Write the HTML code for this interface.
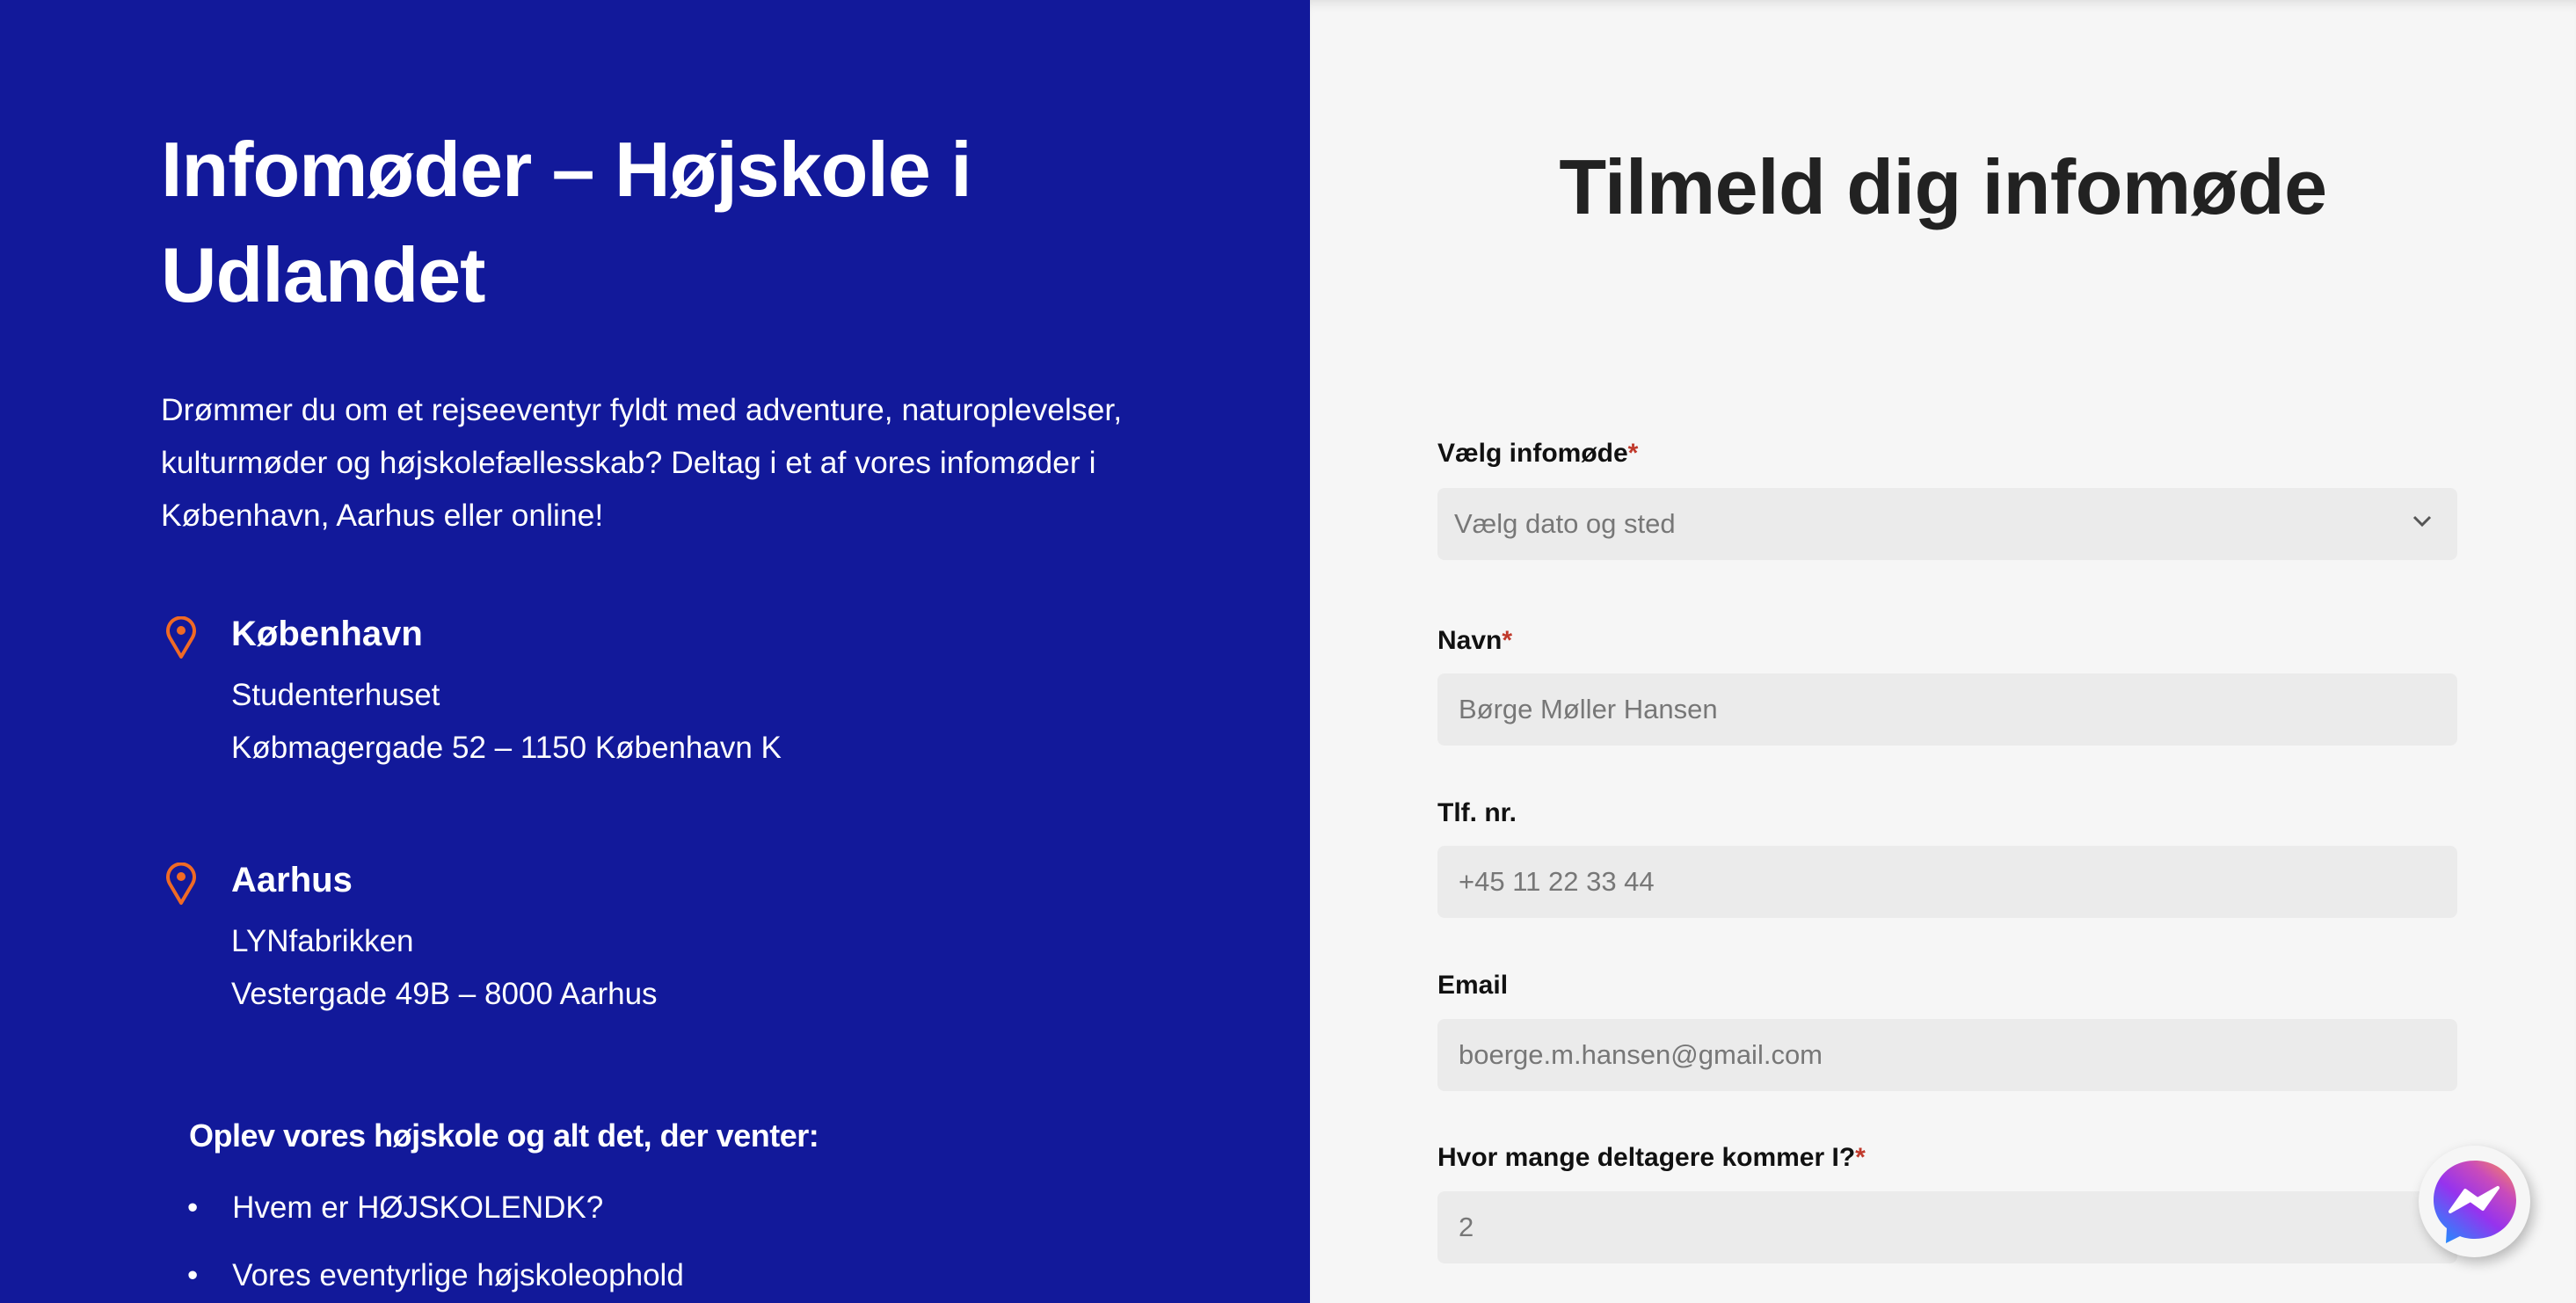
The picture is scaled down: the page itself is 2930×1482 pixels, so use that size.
<!DOCTYPE html>
<html><head><meta charset="utf-8"><style>
*{margin:0;padding:0;box-sizing:border-box}
body{width:2930px;height:1482px;overflow:hidden;font-family:"Liberation Sans",sans-serif;background:#f6f6f6;position:relative}
.left{position:absolute;left:0;top:0;width:1490px;height:1482px;background:#12199a;color:#fff}
.abs{position:absolute;white-space:nowrap}
h1{position:absolute;left:183px;top:133px;font-size:88px;line-height:120px;font-weight:bold;letter-spacing:-1px}
.p{left:183px;font-size:35.5px}
.h{left:263px;font-size:40px;font-weight:bold}
.t{left:263px;font-size:35px}
.pin{position:absolute;left:186px;width:40px;height:50px}
.right{position:absolute;left:1490px;top:0;width:1440px;height:1482px;background:#f6f6f6;box-shadow:inset 0 12px 14px -10px rgba(0,0,0,.12)}
.title{position:absolute;left:0;width:1440px;top:162px;text-align:center;font-size:88px;font-weight:bold;color:#222;letter-spacing:-0.5px}
.lab{position:absolute;left:145px;font-size:30px;font-weight:bold;color:#111}
.lab span{color:#c0392b}
.in{position:absolute;left:145px;width:1160px;height:82px;background:#ebebeb;border-radius:8px;font-size:31px;color:#777;padding-left:24px;line-height:82px}
</style></head><body>
<div class="left">
<h1>Infomøder – Højskole i<br>Udlandet</h1>
<div class="abs p" style="top:446px">Drømmer du om et rejseeventyr fyldt med adventure, naturoplevelser,</div>
<div class="abs p" style="top:506px">kulturmøder og højskolefællesskab? Deltag i et af vores infomøder i</div>
<div class="abs p" style="top:566px">København, Aarhus eller online!</div>
<svg class="pin" style="top:701px" viewBox="0 0 40 50"><path d="M20 46 L7 24 A15 15 0 1 1 33 24 Z" fill="none" stroke="#f06a25" stroke-width="4" stroke-linejoin="round"/><circle cx="20" cy="16" r="5" fill="#f06a25"/></svg>
<div class="abs h" style="top:699px">København</div>
<div class="abs t" style="top:771px">Studenterhuset</div>
<div class="abs t" style="top:831px">Købmagergade 52 – 1150 København K</div>
<svg class="pin" style="top:981px" viewBox="0 0 40 50"><path d="M20 46 L7 24 A15 15 0 1 1 33 24 Z" fill="none" stroke="#f06a25" stroke-width="4" stroke-linejoin="round"/><circle cx="20" cy="16" r="5" fill="#f06a25"/></svg>
<div class="abs h" style="top:979px">Aarhus</div>
<div class="abs t" style="top:1051px">LYNfabrikken</div>
<div class="abs t" style="top:1111px">Vestergade 49B – 8000 Aarhus</div>
<div class="abs" style="left:215px;top:1271px;font-size:36px;font-weight:bold;letter-spacing:-0.5px">Oplev vores højskole og alt det, der venter:</div>
<div class="abs t" style="left:213px;top:1354px">•&nbsp;&nbsp;&nbsp;&nbsp;Hvem er HØJSKOLENDK?</div>
<div class="abs t" style="left:213px;top:1431px">•&nbsp;&nbsp;&nbsp;&nbsp;Vores eventyrlige højskoleophold</div>
</div>
<div class="right">
<div class="title">Tilmeld dig infomøde</div>
<div class="lab" style="top:499px">Vælg infomøde<span>*</span></div>
<div class="in" style="top:555px;padding-left:19px">Vælg dato og sted
<svg style="position:absolute;right:28px;top:30px" width="24" height="16" viewBox="0 0 24 16"><path d="M3 3 L12 12 L21 3" fill="none" stroke="#555" stroke-width="3"/></svg></div>
<div class="lab" style="top:712px">Navn<span>*</span></div>
<div class="in" style="top:766px">Børge Møller Hansen</div>
<div class="lab" style="top:908px">Tlf. nr.</div>
<div class="in" style="top:962px">+45 11 22 33 44</div>
<div class="lab" style="top:1104px">Email</div>
<div class="in" style="top:1159px">boerge.m.hansen@gmail.com</div>
<div class="lab" style="top:1300px">Hvor mange deltagere kommer I?<span>*</span></div>
<div class="in" style="top:1355px">2</div>
</div>
<div style="position:absolute;left:2751px;top:1303px;width:127px;height:127px;border-radius:50%;background:#f6f6f6;box-shadow:4px 6px 14px rgba(0,0,0,.25)"></div>
<svg style="position:absolute;left:2766px;top:1318px" width="98" height="98" viewBox="0 0 98 98">
<defs><linearGradient id="g" x1="0.1" y1="1" x2="0.9" y2="0"><stop offset="0" stop-color="#1f8fff"/><stop offset="0.45" stop-color="#9633ee"/><stop offset="0.75" stop-color="#c94bbb"/><stop offset="1" stop-color="#f78561"/></linearGradient></defs>
<path d="M49 2 C22 2 2 21 2 47 C2 60 8 72 17 79 L16 96 L32 88 C37 90 43 91 49 91 C76 91 96 72 96 47 C96 21 76 2 49 2 Z" fill="url(#g)"/>
<path d="M21 60 L38 36 L52 46 L75 33 L58 57 L44 47 Z" fill="#fff" stroke="#fff" stroke-width="4" stroke-linejoin="round"/>
</svg>
</body></html>
